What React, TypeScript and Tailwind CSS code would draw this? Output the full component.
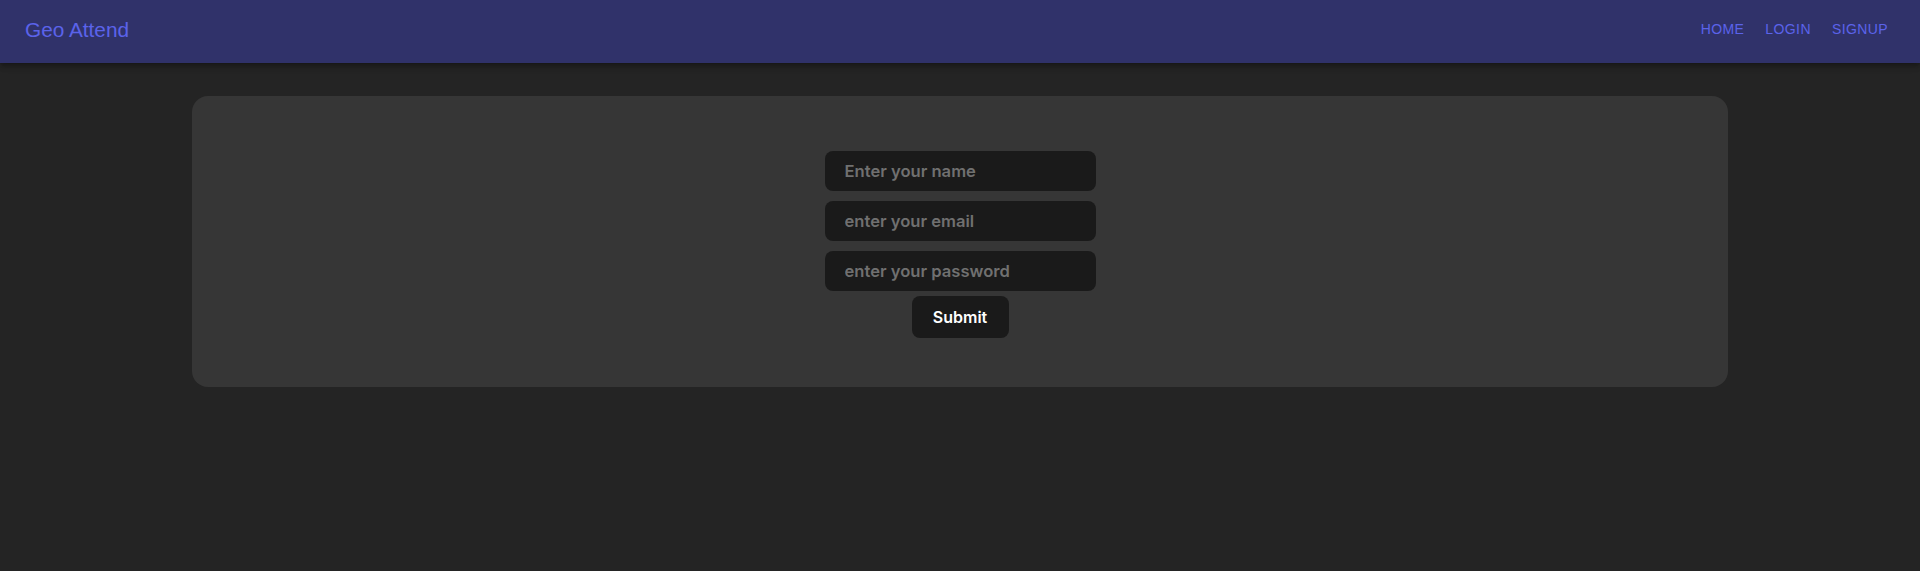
import React from "react";

export default function App() {
  return (
    <div className="min-h-[571px] w-full bg-[#242424] font-['Inter',system-ui,sans-serif]">
      <header className="flex h-[63px] items-center justify-between bg-[#30326a] pl-[25px] pr-[32px] shadow-[0_2px_4px_-1px_rgba(0,0,0,0.2),0_4px_5px_0_rgba(0,0,0,0.14),0_1px_10px_0_rgba(0,0,0,0.12)]">
        <div className="-mt-[3px] font-['Liberation_Sans',Arial,sans-serif] text-[20.8px] leading-none text-[#5b63ea]">
          Geo Attend
        </div>
        <nav className="-mt-[6px] flex items-center gap-[21px] font-['Liberation_Sans',Arial,sans-serif] text-[14px] uppercase leading-none tracking-[0.4px] text-[#5b63ea]">
          <a>HOME</a>
          <a>LOGIN</a>
          <a>SIGNUP</a>
        </nav>
      </header>
      <main className="mx-auto mt-[33px] flex w-[80%] flex-col items-center rounded-2xl bg-[#363636] pb-[49px] pt-[55px]">
        <form className="flex flex-col items-center" onSubmit={(e) => e.preventDefault()}>
          <div className="flex flex-col gap-[10px]">
            <input
              type="text"
              placeholder="Enter your name"
              className="h-[40px] w-[271px] rounded-lg bg-[#1a1a1a] px-[20px] text-[16.6px] font-semibold text-white outline-none placeholder:text-[#707070]"
            />
            <input
              type="email"
              placeholder="enter your email"
              className="h-[40px] w-[271px] rounded-lg bg-[#1a1a1a] px-[20px] text-[16.6px] font-semibold text-white outline-none placeholder:text-[#707070]"
            />
            <input
              type="password"
              placeholder="enter your password"
              className="h-[40px] w-[271px] rounded-lg bg-[#1a1a1a] px-[20px] text-[16.6px] font-semibold text-white outline-none placeholder:text-[#707070]"
            />
          </div>
          <button
            type="submit"
            className="mt-[5px] h-[42px] w-[97px] rounded-lg bg-[#1a1a1a] text-[16px] font-semibold text-white"
          >
            Submit
          </button>
        </form>
      </main>
    </div>
  );
}
